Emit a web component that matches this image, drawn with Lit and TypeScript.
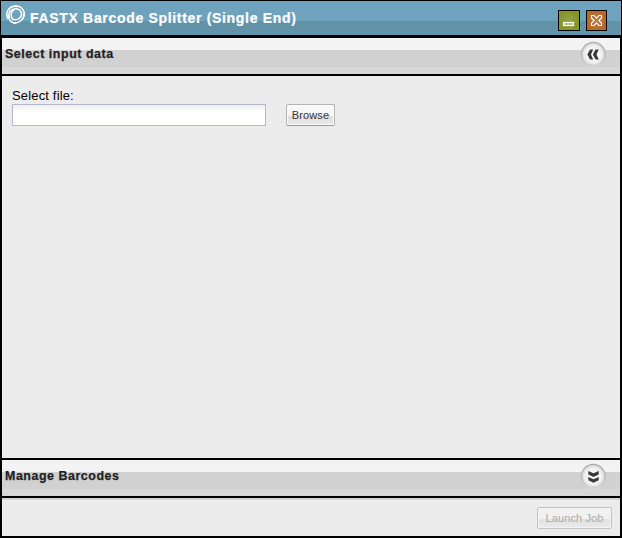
import { LitElement, html, css, svg } from "lit";
import { customElement, property } from "lit/decorators.js";

@customElement("section-bar")
class SectionBar extends LitElement {
  @property() label = "";
  @property({ type: Boolean }) collapsed = false;

  static styles = css`
    :host { display: block; height: 36px; background: linear-gradient(#f3f3f3 0 12px, #d1d1d1 12px 29px, #d7d7d7 29px); }
    .bar { display: flex; height: 100%; justify-content: space-between; padding: 0 13px 0 3px; }
    .label { font-weight: bold; font-size: 12.4px; line-height: 14px; letter-spacing: 0.56px; color: #222; -webkit-text-stroke: 0.25px #222; padding-top: 9px; white-space: nowrap; }
    .toggle { display: block; width: 27px; height: 27px; margin-top: 3px; }
  `;

  render() {
    const mark = this.collapsed
      ? svg`<g fill="#3a3a3a"><path d="M8.3 8L13.5 10.3L18.7 8V11.4L13.5 14L8.3 11.4Z"/><path d="M8.3 14L13.5 16.3L18.7 14V17.2L13.5 19.8L8.3 17.2Z"/></g>`
      : svg`<g fill="#3a3a3a"><path d="M10 8.5H13.2L11 13.5L13.2 18.5H10L7.3 13.5Z"/><path d="M15.5 8.5H18.8L16.5 13.5L18.8 18.5H15.5L12.8 13.5Z"/></g>`;
    return html`<div class="bar">
      <span class="label">${this.label}</span>
      <svg class="toggle" viewBox="0 0 27 27">
        <defs>
          <radialGradient id="face"><stop offset="0.5" stop-color="#f8f8f8"/><stop offset="0.78" stop-color="#eaeaea"/><stop offset="1" stop-color="#c4c4c4"/></radialGradient>
          <linearGradient id="rim" x2="0" y2="1"><stop offset="0" stop-color="#a8a8a8"/><stop offset="0.6" stop-color="#bcbcbc"/><stop offset="1" stop-color="#d6d6d6"/></linearGradient>
        </defs>
        <circle cx="13.3" cy="13.3" r="12" fill="url(#face)" stroke="url(#rim)" stroke-width="1.1"/>
        ${mark}
      </svg>
    </div>`;
  }
}

@customElement("app-root")
class AppRoot extends LitElement {
  static styles = css`
    :host { display: block; width: 622px; height: 538px; font-family: "Liberation Sans", Arial, sans-serif; }
    * { box-sizing: border-box; }
    .window { height: 538px; background: #000; display: flex; flex-direction: column; overflow: hidden; }
    .title { height: 34px; margin: 1px 1px 3px; display: flex; background: linear-gradient(#6fa3bd 0 20px, #6091a6 20px, #6394aa); }
    .logo { width: 22px; height: 22px; margin: 3px 0 0 4px; }
    .name { margin-left: 3px; padding-top: 9px; color: #fff; font-weight: bold; font-size: 14px; line-height: 16px; letter-spacing: 0.68px; -webkit-text-stroke: 0.2px #fff; white-space: nowrap; }
    .controls { display: flex; gap: 6px; margin: 9px 14px 0 auto; }
    .control { display: block; width: 22px; height: 21px; border: 1px solid #000; }
    .min { background: radial-gradient(#94a344, #85952c 70%); }
    .close { background: radial-gradient(#bd834d, #b36a28 70%); width: 21px; }
    .body { margin: 0 2px 2px; display: flex; flex-direction: column; gap: 2px; height: 498px; }
    .content { height: 382px; background: #ececec; padding: 12px 10px; }
    .caption { display: block; font-size: 13px; line-height: 16px; letter-spacing: 0.16px; color: #000; }
    .row { display: flex; gap: 20px; }
    .file { width: 254px; height: 22px; border: 1px solid #b5b5cc; border-radius: 0; background: linear-gradient(#edf1ef, #fff 7px); padding: 0 4px; outline: none; }
    .button { height: 22px; padding: 0; font: 11px/19px "Liberation Sans", Arial, sans-serif; color: #333; border: 1px solid #b4b4b4; border-bottom-color: #999; border-radius: 2px; background: linear-gradient(#f8f8f8 0 11px, #dcdcdc 11px, #ebebeb); box-shadow: inset 0 0 0 1px #fafafa; white-space: nowrap; }
    .browse { width: 49px; letter-spacing: 0.1px; }
    .launch { width: 75px; color: #aaa; border-color: #c5c5c5; background: linear-gradient(#f1f1f1 0 11px, #e2e2e2 11px, #e9e9e9); box-shadow: inset 0 0 0 1px #f3f3f3; letter-spacing: 0.1px; }
    .footer { height: 38px; background: linear-gradient(#d4d4d4 0 2px, #ececec 2px); display: flex; justify-content: flex-end; padding: 9px 8px 0; }
  `;

  render() {
    return html`<div class="window">
      <header class="title">
        <svg class="logo" viewBox="0 0 22 22" fill="none" stroke="#fff" stroke-linecap="round">
          <g transform="translate(.6 .5) scale(.93)" stroke-width="1.6">
            <path d="M2.2 15C-1 7 5 0.8 12 2.2"/><path d="M4.2 14C1.9 8.4 6.4 4.2 12 4.6"/>
            <path d="M9 1.8C16 0.6 21 5.6 19.8 12"/><path d="M12 4.6C16 5 18 9 16.8 13"/>
            <path d="M20.2 9C20 17 13 21.8 6.5 18.6"/><path d="M17 11.5C15.5 16 11 17.8 7 15.4"/>
            <path d="M11 20.5C6 20.5 2.5 16 3 11"/><path d="M9 5.8C5.2 8.4 4.9 12.8 8 16"/>
          </g>
        </svg>
        <span class="name">FASTX Barcode Splitter (Single End)</span>
        <div class="controls">
          <svg class="control min" viewBox="0 0 20 19"><rect x="4.5" y="11.5" width="10" height="3" fill="#b4bd78" stroke="#fff" stroke-width="1.2"/></svg>
          <svg class="control close" viewBox="0 0 19 19"><path d="M4.5 4.5H7L9.5 7.2L12 4.5H14.5V7L11.8 9.5L14.5 12V14.5H12L9.5 11.8L7 14.5H4.5V12L7.2 9.5L4.5 7Z" fill="#b87337" stroke="#fff" stroke-width="1.1"/></svg>
        </div>
      </header>
      <main class="body">
        <section-bar label="Select input data"></section-bar>
        <section class="content">
          <label class="caption" for="file">Select file:</label>
          <div class="row">
            <input class="file" id="file" type="text" />
            <button class="button browse">Browse</button>
          </div>
        </section>
        <section-bar label="Manage Barcodes" collapsed></section-bar>
        <footer class="footer"><button class="button launch" disabled>Launch Job</button></footer>
      </main>
    </div>`;
  }
}
